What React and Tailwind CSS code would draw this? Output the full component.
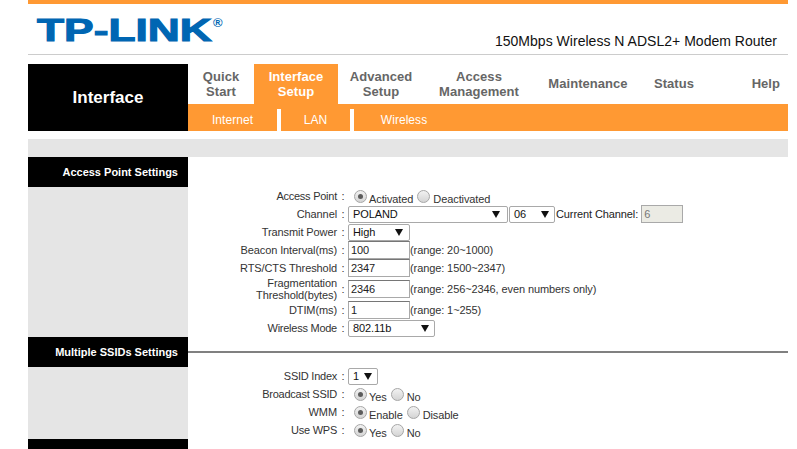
const font = { fontFamily: '"Liberation Sans", Arial, sans-serif' };

function Radio({ on, label, last, first }) {
  return (
    <span className={`flex items-center ${first ? 'ml-[6px]' : ''}`}>
      <span className="flex h-[13px] w-[13px] shrink-0 items-center justify-center rounded-full border border-[#a6a6a6] bg-gradient-to-b from-[#f2f2f2] to-[#d4d4d4]">
        {on && <span className="h-[5px] w-[5px] rounded-full bg-[#5c5c5c]" />}
      </span>
      <span className={`relative top-[3px] ${last ? 'ml-[3px]' : 'mr-[4px] ml-[2px]'}`}>{label}</span>
    </span>
  );
}

function Select({ value, width, caret }) {
  return (
    <span className={`flex h-[17px] items-center justify-between rounded-[2px] border border-[#a9a9a9] bg-white pl-[4px] text-[#111] ${width}`}>
      <span>{value}</span>
      <svg width="8" height="7" viewBox="0 0 8 7" className={caret}>
        <path d="M0 0h8L4 7z" fill="#111" />
      </svg>
    </span>
  );
}

function Input({ value }) {
  return (
    <span className="flex h-[18px] w-[62px] items-center border border-[#a9a9a9] border-t-[#767676] bg-white pl-[2px] text-[#222]">
      {value}
    </span>
  );
}

function Row({ label, tight, h = 'h-[18px]', children }) {
  return (
    <div className={`flex items-center ${h}`}>
      <div className={`w-[150px] pr-[1px] text-right leading-[12px] ${tight ? 'tracking-[-0.25px]' : ''}`}>{label}</div>
      <div className="w-[10px] text-center">:</div>
      <div className="flex items-center">{children}</div>
    </div>
  );
}

function Tab({ w, active, children, className = '' }) {
  return (
    <div className={`flex h-full items-center justify-center text-center leading-[15px] ${w} ${active ? 'bg-[#ff9933] text-white' : 'text-[#666666]'} ${className}`}>
      <span>{children}</span>
    </div>
  );
}

function SideHead({ children }) {
  return (
    <div className="flex h-[30px] w-[160px] items-center justify-end bg-black pr-[10px] text-[11px] font-bold tracking-normal text-white">
      {children}
    </div>
  );
}

export default function App() {
  return (
    <div className="h-[449px] w-[797px] overflow-hidden bg-white pr-[9px] pl-[28px] text-[11px] tracking-[-0.1px] text-[#333]" style={font}>
      <div className="h-[4px] bg-[#ff9933]" />

      <header className="flex h-[51px] items-end justify-between border-b border-[#cccccc] tracking-normal">
        <div className="relative mb-[8px] ml-[9px] h-[31px]">
          <span className="block origin-left scale-x-[1.385] text-[32px] leading-[31px] font-bold text-[#0066b3] [-webkit-text-stroke:1.1px_#0066b3]">TP-LINK</span>
          <span className="absolute top-[-2px] left-[176px] text-[13px] font-bold text-[#0066b3]">®</span>
        </div>
        <div className="mr-[11px] mb-[5px] text-[14px] leading-[16px] tracking-[0.02px] text-[#111]">150Mbps Wireless N ADSL2+ Modem Router</div>
      </header>

      <nav className="mt-[9px] flex h-[67px] tracking-normal">
        <div className="flex w-[160px] items-center justify-center bg-black text-[17px] font-bold text-white">Interface</div>
        <div className="flex-1">
          <div className="flex h-[40px] text-[13px] font-bold tracking-[0.05px]">
            <Tab w="w-[66px]">Quick<br />Start</Tab>
            <Tab w="w-[84px]" active>Interface<br />Setup</Tab>
            <Tab w="w-[86px]">Advanced<br />Setup</Tab>
            <Tab w="w-[110px]">Access<br />Management</Tab>
            <Tab w="w-[108px]" className="pb-[2px]">Maintenance</Tab>
            <Tab w="w-[64px]" className="pb-[2px]">Status</Tab>
            <Tab w="w-[82px]" className="justify-end pr-[8px] pb-[2px]">Help</Tab>
          </div>
          <div className="flex h-[27px] bg-[#ff9933] text-[12px] tracking-[0.05px] text-white">
            <div className="flex w-[89px] items-center justify-center pt-[4px]">Internet</div>
            <div className="mt-[5px] w-[4px] bg-white" />
            <div className="flex w-[69px] items-center justify-center pt-[4px]">LAN</div>
            <div className="mt-[5px] w-[4px] bg-white" />
            <div className="flex w-[100px] items-center justify-center pt-[4px]">Wireless</div>
          </div>
        </div>
      </nav>

      <div className="mt-[8px] h-[18px] bg-[#e5e5e5]" />

      <section>
        <SideHead>Access Point Settings</SideHead>
        <div className="flex">
          <div className="w-[160px] bg-[#e5e5e5]" />
          <div className="flex-1">
            <Row tight label="Access Point">
              <Radio first on label="Activated" />
              <Radio label="Deactivated" last />
            </Row>
            <Row label="Channel">
              <Select value="POLAND" width="w-[160px]" caret="mr-[7px]" />
              <span className="ml-[1px]"><Select value="06" width="w-[46px]" caret="mr-[5px]" /></span>
              <span className="ml-[1px] text-[#222]">Current Channel:</span>
              <span className="ml-[3px] flex h-[18px] w-[42px] items-center border border-[#a9a9a9] bg-[#ebebe4] pl-[2px] text-[#777]">6</span>
            </Row>
            <Row label="Transmit Power">
              <Select value="High" width="w-[62px]" caret="mr-[6px]" />
            </Row>
            <Row label="Beacon Interval(ms)">
              <Input value="100" />
              <span>(range: 20~1000)</span>
            </Row>
            <Row label="RTS/CTS Threshold">
              <Input value="2347" />
              <span>(range: 1500~2347)</span>
            </Row>
            <Row label={<>Fragmentation<br />Threshold(bytes)</>} h="h-[24px]">
              <Input value="2346" />
              <span>(range: 256~2346, even numbers only)</span>
            </Row>
            <Row label="DTIM(ms)">
              <Input value="1" />
              <span>(range: 1~255)</span>
            </Row>
            <Row tight label="Wireless Mode">
              <Select value="802.11b" width="w-[87px]" caret="mr-[5px]" />
            </Row>
          </div>
        </div>
      </section>

      <section>
        <div className="flex items-center">
          <SideHead>Multiple SSIDs Settings</SideHead>
          <div className="h-[2px] flex-1 bg-[#808080]" />
        </div>
        <div className="flex">
          <div className="w-[160px] bg-[#e5e5e5]" />
          <div className="flex-1">
            <Row tight label="SSID Index">
              <Select value="1" width="w-[30px]" caret="mr-[5px]" />
            </Row>
            <Row tight label="Broadcast SSID">
              <Radio first on label="Yes" />
              <Radio label="No" last />
            </Row>
            <Row label="WMM">
              <Radio first on label="Enable" />
              <Radio label="Disable" last />
            </Row>
            <Row tight label="Use WPS">
              <Radio first on label="Yes" />
              <Radio label="No" last />
            </Row>
          </div>
        </div>
      </section>

      <div className="h-[10px] w-[160px] bg-black" />
    </div>
  );
}
